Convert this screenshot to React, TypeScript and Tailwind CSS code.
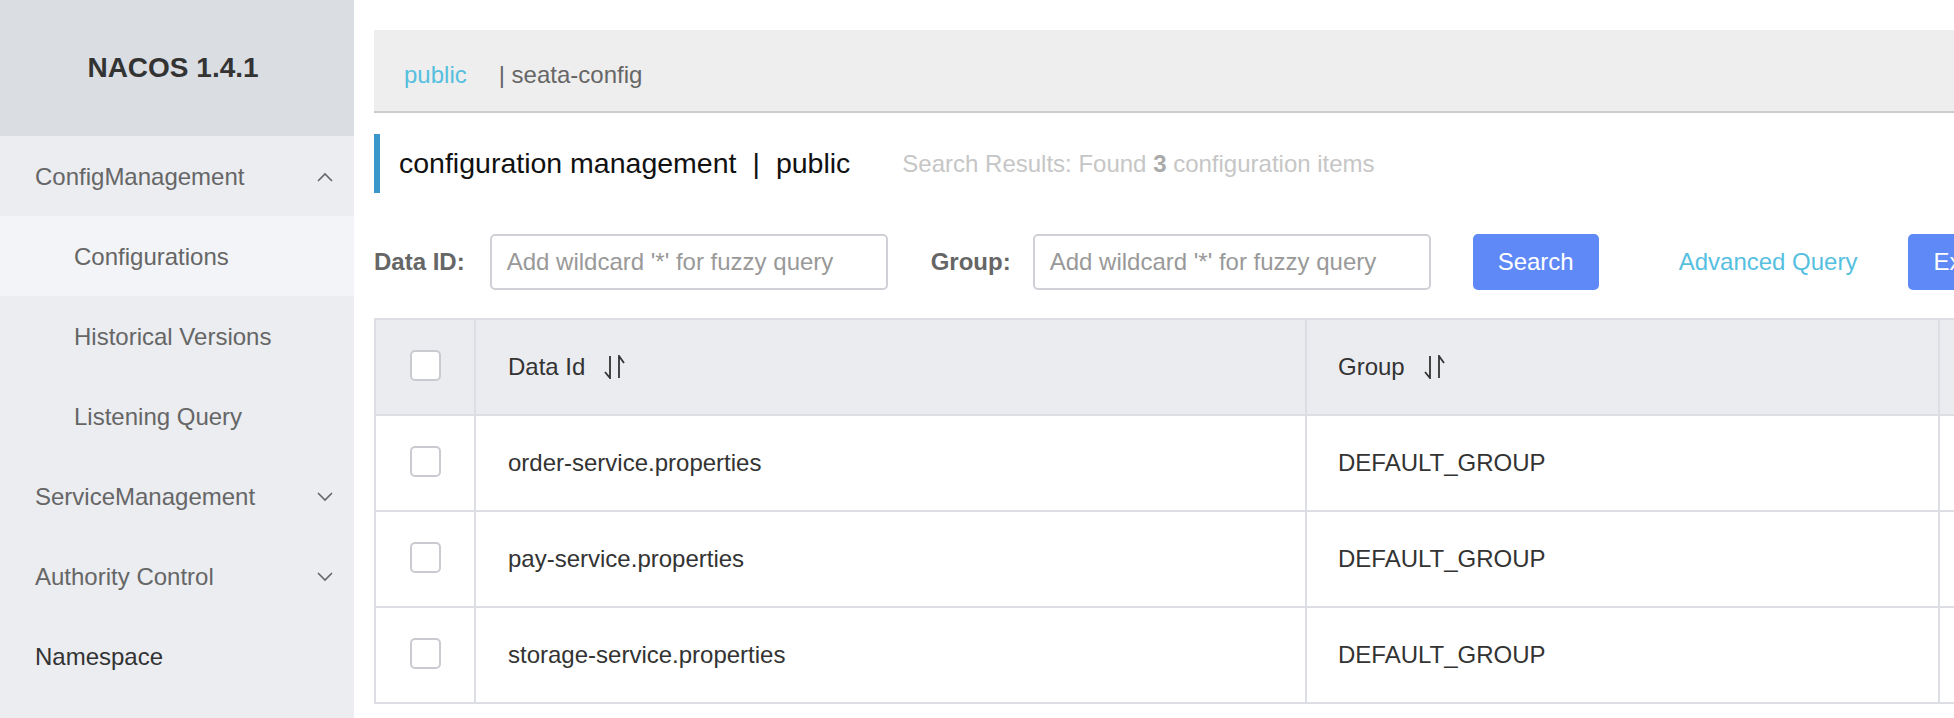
import React from 'react';

const font = { fontFamily: '"Liberation Sans", Arial, Helvetica, sans-serif' };

type MenuItem = {
  label: string;
  sub?: boolean;
  active?: boolean;
  chevron?: 'up' | 'down';
  dark?: boolean;
};

const menu: MenuItem[] = [
  { label: 'ConfigManagement', chevron: 'up' },
  { label: 'Configurations', sub: true, active: true },
  { label: 'Historical Versions', sub: true },
  { label: 'Listening Query', sub: true },
  { label: 'ServiceManagement', chevron: 'down' },
  { label: 'Authority Control', chevron: 'down' },
  { label: 'Namespace', dark: true },
];

const rows = [
  { id: 'order-service.properties', group: 'DEFAULT_GROUP' },
  { id: 'pay-service.properties', group: 'DEFAULT_GROUP' },
  { id: 'storage-service.properties', group: 'DEFAULT_GROUP' },
];

const Chevron = ({ dir }: { dir: 'up' | 'down' }) => (
  <svg width="16" height="10" viewBox="0 0 16 10" fill="none" stroke="#666" strokeWidth="1.6">
    {dir === 'up' ? <path d="M1 9 L8 2 L15 9" /> : <path d="M1 1 L8 8 L15 1" />}
  </svg>
);

const SortIcon = () => (
  <svg width="21" height="24" viewBox="0 0 21 24" fill="none" stroke="#333" strokeWidth="1.8" className="ml-[19px]">
    <path d="M6 1 V23 L1 17" />
    <path d="M15 23 V1 L20 8" />
  </svg>
);

const Checkbox = () => (
  <div className="w-[31px] h-[31px] rounded-[5px] border-2 border-[#c9cbd1] bg-white mx-auto -mt-1" />
);

const Sidebar = () => (
  <aside className="w-[354px] shrink-0 h-full bg-[#ebedf1] flex flex-col">
    <div className="h-[136px] bg-[#dadde2] flex items-center justify-center pr-2">
      <span className="text-[28px] font-bold text-[#333]">NACOS 1.4.1</span>
    </div>
    {menu.map((m) => (
      <div
        key={m.label}
        className={`h-[80px] flex items-center justify-between pr-[21px] pt-[2px] text-[24px] ${
          m.sub ? 'pl-[74px]' : 'pl-[35px]'
        } ${m.active ? 'bg-[#f3f4f7]' : ''} ${m.dark ? 'text-[#333]' : 'text-[#666]'}`}
      >
        <span>{m.label}</span>
        {m.chevron && <Chevron dir={m.chevron} />}
      </div>
    ))}
  </aside>
);

export default function App() {
  return (
    <div className="flex w-[1954px] h-[718px] bg-white overflow-hidden" style={font}>
      <Sidebar />
      <main className="flex-1 min-w-0 overflow-hidden pl-[20px] pt-[30px]">
        {/* breadcrumb */}
        <div className="h-[83px] bg-[#eeeeee] border-b-2 border-[#cccccc] flex items-center pl-[30px] pt-[8px] text-[24px] whitespace-nowrap">
          <span className="text-[#56bfdf] mr-[32px]">public</span>
          <span className="text-[#666]">| seata-config</span>
        </div>

        {/* title */}
        <div className="mt-[21px] h-[59px] flex items-center whitespace-nowrap">
          <div className="w-[6px] h-full bg-[#3b97c9]" />
          <span className="ml-[19px] text-[28.5px] text-[#111]">configuration management</span>
          <span className="mx-[16px] text-[28.5px] text-[#111]">|</span>
          <span className="text-[28.5px] text-[#111]">public</span>
          <span className="ml-[52px] text-[24px] text-[#c6c6c6]">
            Search Results: Found <b className="text-[#aaa]">3</b> configuration items
          </span>
        </div>

        {/* filters */}
        <div className="mt-[41px] h-[56px] flex items-center whitespace-nowrap text-[24px]">
          <span className="font-bold text-[#666]">Data ID:</span>
          <div className="ml-[25px] w-[398px] h-full shrink-0 rounded-[5px] border-2 border-[#cfd1d7] flex items-center pl-[15px] text-[#999]">
            Add wildcard '*' for fuzzy query
          </div>
          <span className="ml-[43px] font-bold text-[#666]">Group:</span>
          <div className="ml-[22px] w-[398px] h-full shrink-0 rounded-[5px] border-2 border-[#cfd1d7] flex items-center pl-[15px] text-[#999]">
            Add wildcard '*' for fuzzy query
          </div>
          <button className="ml-[42px] w-[126px] h-full shrink-0 rounded-[5px] bg-[#5f89f7] text-white">Search</button>
          <span className="ml-[80px] text-[#56bfdf]">Advanced Query</span>
          <button className="ml-[51px] h-full shrink-0 rounded-[5px] bg-[#5f89f7] text-white px-[25px]">
            Export query results
          </button>
        </div>

        {/* table */}
        <div className="mt-[28px] w-[1900px] border-l-2 border-t-2 border-[#dcdee3] text-[24px] text-[#333] whitespace-nowrap">
          <div className="grid grid-cols-[100px_831px_633px_336px] h-[96px] bg-[#ebecf0] border-b-2 border-[#dcdee3]">
            <div className="border-r-2 border-[#dcdee3] flex items-center">
              <Checkbox />
            </div>
            <div className="border-r-2 border-[#dcdee3] flex items-center pl-[32px]">
              Data Id
              <SortIcon />
            </div>
            <div className="border-r-2 border-[#dcdee3] flex items-center pl-[31px]">
              Group
              <SortIcon />
            </div>
            <div className="border-r-2 border-[#dcdee3]" />
          </div>
          {rows.map((r) => (
            <div key={r.id} className="grid grid-cols-[100px_831px_633px_336px] h-[96px] border-b-2 border-[#dcdee3]">
              <div className="border-r-2 border-[#dcdee3] flex items-center">
                <Checkbox />
              </div>
              <div className="border-r-2 border-[#dcdee3] flex items-center pl-[32px]">{r.id}</div>
              <div className="border-r-2 border-[#dcdee3] flex items-center pl-[31px]">{r.group}</div>
              <div className="border-r-2 border-[#dcdee3]" />
            </div>
          ))}
        </div>
      </main>
    </div>
  );
}
